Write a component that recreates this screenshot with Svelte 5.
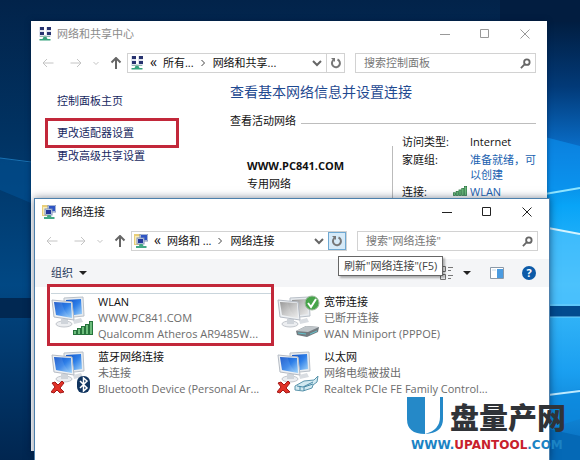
<script lang="ts">
    type Kind = "wifi" | "modem" | "bluetooth" | "ethernet";

    interface Connection {
        name: string;
        status: string;
        device: string;
        kind: Kind;
        selected?: boolean;
    }

    const connections: Connection[] = [
        { name: "WLAN", status: "WWW.PC841.COM", device: "Qualcomm Atheros AR9485W...", kind: "wifi", selected: true },
        { name: "宽带连接", status: "已断开连接", device: "WAN Miniport (PPPOE)", kind: "modem" },
        { name: "蓝牙网络连接", status: "未连接", device: "Bluetooth Device (Personal Ar...", kind: "bluetooth" },
        { name: "以太网", status: "网络电缆被拔出", device: "Realtek PCIe FE Family Control...", kind: "ethernet" },
    ];

    let centerSearch = $state("");
    let connSearch = $state("");
</script>

{#snippet centerIcon()}
    <svg class="icon" viewBox="0 0 14 14" aria-hidden="true">
        <g fill="#dfe4ee">
            <rect x="1" y="0" width="5" height="5" />
            <rect x="8" y="0" width="5" height="5" />
            <rect x="1" y="5" width="5" height="5" />
            <rect x="8" y="5" width="5" height="5" />
        </g>
        <g fill="#27336f">
            <rect x="2" y="0" width="4" height="3" />
            <rect x="9" y="0" width="4" height="3" />
            <rect x="2" y="5" width="4" height="3" />
            <rect x="9" y="5" width="4" height="3" />
        </g>
        <path d="M7 8v3M2 9.500h10" stroke="#8fb7ad" />
        <path d="M5.500 10h3l1 2h3v1.500h-11V12h3z" fill="#35a27c" />
    </svg>
{/snippet}

{#snippet connIcon()}
    <svg class="icon" viewBox="0 0 14 14" aria-hidden="true">
        <rect x="0" y="0" width="8" height="11" fill="#e9ce78" />
        <rect x="1" y="2" width="5" height="8" fill="#f8ecb8" />
        <rect x="6" y="0" width="8" height="7" fill="#cfdcf0" stroke="#7f90b8" />
        <rect x="7" y="1" width="6" height="5" fill="#2f55c4" />
        <rect x="3" y="4" width="7" height="6" fill="#dce6f5" stroke="#7f90b8" />
        <rect x="4" y="5" width="5" height="4" fill="#24379a" />
        <path d="M5.500 10h3l1 2h3v2H2v-2h3z" fill="#43a884" />
    </svg>
{/snippet}

{#snippet bars()}
    {#each [4, 6, 8, 10, 13] as h, i}
        <rect x={0.5 + i * 4} y={13.5 - h} width="3" height={h} fill="#6dbd7c" stroke="#26733c" />
    {/each}
{/snippet}

{#snippet titlebar(title: string, icon: any)}
    <header class="titlebar">
        {@render icon()}
        <h1>{title}</h1>
        <div class="controls">
            <button aria-label="最小化"><svg viewBox="0 0 10 10"><path d="M0 5.500h10" /></svg></button>
            <button aria-label="最大化"><svg viewBox="0 0 10 10"><path d="M.5.5h8v8h-8z" /></svg></button>
            <button aria-label="关闭"><svg viewBox="0 0 10 10"><path d="M.5.5l9 9M9.500.5l-9 9" /></svg></button>
        </div>
    </header>
{/snippet}

{#snippet navButtons()}
    <div class="nav">
        <button aria-label="后退" disabled><svg viewBox="0 0 12 12"><path d="M11.500 6H1M5 2L1 6l4 4" /></svg></button>
        <button aria-label="前进" disabled><svg viewBox="0 0 12 12"><path d="M.5 6H11M7 2l4 4-4 4" /></svg></button>
        <button class="recent" aria-label="最近浏览的位置" disabled><svg viewBox="0 0 12 12"><path d="M3.500 5L6 7.500 8.500 5" /></svg></button>
        <button class="up" aria-label="上移"><svg viewBox="0 0 12 12"><path d="M6 12V1M1.500 5.500L6 1l4.500 4.500" /></svg></button>
    </div>
{/snippet}

{#snippet address(first: string, second: string, icon: any, hot: boolean)}
    <div class="address">
        {@render icon()}
        <span class="chev">«</span>
        <button class="crumb first">{first}</button>
        <svg class="sep" viewBox="0 0 6 8" aria-hidden="true"><path d="M1.500 1l3 3-3 3" /></svg>
        <button class="crumb">{second}</button>
        <button class="drop" aria-label="以前的位置"><svg viewBox="0 0 10 8"><path d="M1 2l4 4 4-4" /></svg></button>
        <button class="refresh" class:hot aria-label="刷新">
            <svg viewBox="0 0 12 12"><path d="M7.500 2.500A4 4 0 1 1 3.500 3" /><path class="head" d="M1 1h4v4z" /></svg>
        </button>
    </div>
{/snippet}

{#snippet magnifier()}
    <svg viewBox="0 0 12 12" aria-hidden="true"><circle cx="7.500" cy="4.500" r="3" /><path d="M5.500 6.500L1 11" /></svg>
{/snippet}

{#snippet adapterIcon(kind: Kind)}
    <svg class="adapter" viewBox="0 0 44 48" aria-hidden="true">
        <defs>
            <linearGradient id="screen-{kind}" x1="0" y1="0" x2="1" y2="1">
                {#if kind === "modem"}
                    <stop offset="0" stop-color="#8d8d8d" />
                    <stop offset=".5" stop-color="#c4c4c4" />
                    <stop offset="1" stop-color="#ededed" />
                {:else}
                    <stop offset="0" stop-color="#0f4fc6" />
                    <stop offset=".5" stop-color="#2e7fe8" />
                    <stop offset="1" stop-color="#a5d6fa" />
                {/if}
            </linearGradient>
        </defs>
        <path d="M22 26l8-2 2 4-9 2z" fill="#d9dde2" />
        <path d="M13 4l19-1 1 19-20 2z" fill="#e7ebef" stroke="#b9c0c8" />
        <path d="M15 6l15-1 1 15-15 2z" fill="url(#screen-{kind})" />
        <ellipse cx="13" cy="30" rx="8" ry="3" fill="#eceef1" stroke="#c2c6cc" />
        <path d="M10 25h7v5h-7z" fill="#cfd4da" />
        <path d="M1 6l20 2 2 18-20-3z" fill="#edf0f3" stroke="#b5bbc4" />
        <path d="M3 8l17 1 1 15-16-3z" fill="url(#screen-{kind})" />
        <path d="M3 8l8 .5q1 8 8 15L5 21z" fill="#fff" opacity=".1" />

        {#if kind === "wifi"}
            <g transform="translate(22 27)">{@render bars()}</g>
        {:else if kind === "modem"}
            <circle cx="35" cy="9" r="7" fill="#46a449" stroke="#9fb79f" />
            <path d="M31 9l3 4 5-8" fill="none" stroke="#fff" stroke-width="2" />
            <path d="M19 37l10-5 13 1-1 5-11 5-10-2z" fill="#737b80" />
            <path d="M19 37l10-5 13 1-11 5z" fill="#c0c6ca" />
            <path d="M21 39l8 1M33 40l7-3" stroke="#62c1cb" />
        {:else}
            <path d="M1 34l3-1 3 3 4-4 2 2-4 5 4 4-4 1-3-3-3 3-3-1 4-5z" fill="#e13228" stroke="#a31818" />
            {#if kind === "bluetooth"}
                <rect x="26" y="27" width="13" height="17" rx="6" fill="#10345f" />
                <path d="M29 32l7 7-3.500 3V29l3.500 3-7 7" fill="none" stroke="#fff" stroke-width="1.500" />
            {:else}
                <path d="M18 37l9-5 10-1 4-4-1 6-4 3-1 3-9 3-8-1z" fill="#d2e9f1" stroke="#5a94ab" />
                <path d="M20 37l6 1 10-5M23 41v-4M27 42v-4M27 38l9-3" fill="none" stroke="#4989a6" />
            {/if}
        {/if}
    </svg>
{/snippet}

<div class="desktop">
    <svg class="wallpaper" viewBox="0 0 580 460" preserveAspectRatio="none" aria-hidden="true">
        <defs>
            <linearGradient id="left" x1="0" y1="0" x2="0" y2="1">
                <stop offset="0" stop-color="#02234a" />
                <stop offset=".3" stop-color="#013363" />
                <stop offset=".62" stop-color="#014884" />
                <stop offset=".7" stop-color="#013f77" />
                <stop offset="1" stop-color="#012650" />
            </linearGradient>
            <linearGradient id="right" x1="0" y1="0" x2="0" y2="1">
                <stop offset="0" stop-color="#011d40" />
                <stop offset=".15" stop-color="#023a78" />
                <stop offset=".3" stop-color="#0a72cf" />
                <stop offset=".42" stop-color="#08a4f7" />
                <stop offset=".6" stop-color="#3dbdfb" />
                <stop offset=".8" stop-color="#1a9ff0" />
                <stop offset="1" stop-color="#0568b8" />
            </linearGradient>
        </defs>
        <rect width="580" height="460" fill="url(#left)" />
        <rect x="500" y="21" width="80" height="439" fill="url(#right)" />
        <rect x="500" width="80" height="22" fill="#021d40" />
        <path d="M0 158l31 5v40L0 190z" fill="#025294" opacity=".6" />
        <path d="M0 158l31 4" stroke="#1972b4" />
        <path d="M0 308h34v20H0z" fill="#012852" transform="translate(0 -10)" />
        <path d="M545 137l35 9v44l-35 5z" fill="#0b92f0" opacity=".6" />
        <path d="M545 194l35-6" stroke="#8ee5ff" stroke-width="2" />
        <path d="M548 228l32 6v73h-32z" fill="#55c5fd" opacity=".6" />
        <path d="M548 228l32 6" stroke="#d4f4ff" stroke-width="2" />
        <path d="M548 306h32v11h-32z" fill="#024b8f" />
        <path d="M548 305h32M548 317h32" stroke="#74d1fb" />
        <path d="M548 395l32-6v30l-32 10z" fill="#0c89de" opacity=".7" />
        <path d="M548 395l32-4" stroke="#bdeaff" stroke-width="2" />
        <path d="M548 429l32 7v24h-32z" fill="#0569b6" />
    </svg>

    <section class="window center" aria-label="网络和共享中心">
        {@render titlebar("网络和共享中心", centerIcon)}
        <div class="navrow">
            {@render navButtons()}
            {@render address("所有...", "网络和共享...", centerIcon, false)}
            <label class="search">
                <input type="text" aria-label="搜索控制面板" placeholder="搜索控制面板" bind:value={centerSearch} />
                {@render magnifier()}
            </label>
        </div>
        <div class="center-body">
            <nav class="sidebar">
                <a href="#home">控制面板主页</a>
                <a class="marked" href="#adapter">更改适配器设置</a>
                <a href="#sharing">更改高级共享设置</a>
            </nav>
            <main>
                <h2>查看基本网络信息并设置连接</h2>
                <div class="legend">查看活动网络</div>
                <div class="active">
                    <div class="network">
                        <strong>WWW.PC841.COM</strong>
                        <span>专用网络</span>
                    </div>
                    <dl>
                        <dt>访问类型:</dt>
                        <dd>Internet</dd>
                        <dt>家庭组:</dt>
                        <dd><a href="#homegroup">准备就绪，可以创建</a></dd>
                        <dt>连接: <svg class="signal" viewBox="0 0 20 14" aria-hidden="true">{@render bars()}</svg></dt>
                        <dd><a href="#wlan">WLAN</a></dd>
                    </dl>
                </div>
            </main>
        </div>
    </section>

    <section class="window connections" aria-label="网络连接">
        {@render titlebar("网络连接", connIcon)}
        <div class="navrow">
            {@render navButtons()}
            {@render address("网络和 ...", "网络连接", connIcon, true)}
            <label class="search">
                <input type="text" aria-label="搜索网络连接" placeholder={'搜索"网络连接"'} bind:value={connSearch} />
                {@render magnifier()}
            </label>
            <div class="tooltip" role="tooltip">刷新"网络连接"(F5)</div>
        </div>
        <div class="toolbar">
            <button class="organize">组织 <i class="caret"></i></button>
            <button class="view" aria-label="更改视图">
                <svg viewBox="0 0 14 14"><path d="M.5.5h5v5h-5zM.5 8.500h5v5h-5zM8 1.500h5M8 4.500h3M8 9.500h5M8 12.500h3" fill="none" stroke="#777" /></svg>
                <i class="caret"></i>
            </button>
            <button class="pane" aria-label="预览窗格">
                <svg viewBox="0 0 14 12"><path d="M.5.5h13v11H.5z" fill="#fff" stroke="#8b99a8" /><path d="M7 2h6v9H7z" fill="#4b9be0" /><path d="M2 3h4" stroke="#c4d8ea" /></svg>
            </button>
            <button class="help" aria-label="帮助">?</button>
        </div>
        <ul class="items">
            {#each connections as conn}
                <li class:selected={conn.selected}>
                    {@render adapterIcon(conn.kind)}
                    <div class="lines">
                        <span class="name">{conn.name}</span>
                        <span>{conn.status}</span>
                        <span>{conn.device}</span>
                    </div>
                </li>
            {/each}
        </ul>
    </section>

    <div class="watermark">
        <div class="brand">
            <svg viewBox="0 0 38 38" aria-hidden="true">
                <path d="M1 0h18v37Q1 37 1 22z" fill="#2589c8" />
                <path d="M19 0h15v20q0 14-15 17z" fill="#fff" opacity=".85" />
                <path d="M34 0h3v22q0 14-18 15 15-4 15-17z" fill="#2589c8" />
            </svg>
            <b>盘量产网</b>
        </div>
        <div class="site">WWW.<em>UPANTOOL</em>.COM</div>
    </div>
</div>

<style>
    :global(body) {
        margin: 0;
    }

    .desktop {
        position: relative;
        min-height: 100vh;
        overflow: hidden;
        background: #01305f;
        color: #111;
        font-family: "Open Sans", "Noto Sans CJK SC", sans-serif;
        font-size: 11px;
        line-height: 16px;
    }

    .wallpaper {
        position: absolute;
        width: 100%;
        height: 100%;
    }

    button {
        display: flex;
        align-items: center;
        justify-content: center;
        padding: 0;
        border: 0;
        background: none;
        color: inherit;
        font: inherit;
        white-space: nowrap;
    }

    a {
        color: #1a62b0;
        text-decoration: none;
    }

    .window {
        position: absolute;
        box-sizing: border-box;
        background: #fff;
    }

    .center {
        top: 21px;
        right: 33px;
        bottom: 9px;
        left: 31px;
        box-shadow: 0 0 5px rgba(0, 20, 50, 0.5);
    }

    .connections {
        top: 198px;
        right: 30px;
        bottom: -2px;
        left: 34px;
        border: 1px solid #4d80ac;
        box-shadow: 0 0 8px rgba(0, 20, 50, 0.5);
    }

    .titlebar {
        display: flex;
        align-items: center;
        gap: 5px;
        height: 26px;
        padding-left: 7px;
    }

    .titlebar h1 {
        flex: 1;
        margin: 0;
        font-size: 11px;
        font-weight: 400;
    }

    .center h1 {
        color: #8b8b8b;
    }

    .icon {
        width: 14px;
        height: 14px;
        flex: none;
    }

    .controls {
        display: flex;
        gap: 20px;
        padding-right: 12px;
    }

    .controls button {
        width: 20px;
        height: 20px;
    }

    .controls svg {
        width: 10px;
        height: 10px;
        fill: none;
        stroke: #222;
    }

    .center .controls svg {
        stroke: #999;
    }

    .navrow {
        position: relative;
        display: flex;
        gap: 10px;
        align-items: center;
        height: 32px;
        padding: 0 11px;
    }

    .nav {
        display: flex;
        flex: none;
        align-items: center;
        gap: 16px;
        margin-right: -5px;
    }

    .nav button {
        width: 12px;
        height: 16px;
    }

    .nav svg {
        width: 12px;
        height: 12px;
        flex: none;
        fill: none;
        stroke: #c4c4c4;
    }

    .nav .recent,
    .nav .up {
        margin-left: -8px;
    }

    .nav .up svg {
        stroke: #666;
        stroke-width: 2;
    }

    .address,
    .search {
        display: flex;
        align-items: center;
        box-sizing: border-box;
        height: 20px;
        border: 1px solid #d2d2d2;
        background: #fff;
    }

    .address {
        flex: 1;
        padding-left: 2px;
    }

    .chev {
        margin: -2px 6px 0 6px;
        font-size: 14px;
    }

    .first {
        margin-right: 6px;
    }

    .sep {
        width: 6px;
        height: 8px;
        margin-right: 7px;
        fill: none;
        stroke: #444;
    }

    .drop {
        margin-left: auto;
        width: 18px;
    }

    .drop svg {
        width: 10px;
        height: 8px;
        fill: none;
        stroke: #666;
        stroke-width: 2;
    }

    .refresh {
        align-self: stretch;
        width: 18px;
        border-left: 1px solid #d2d2d2;
    }

    .refresh svg {
        width: 12px;
        height: 12px;
        fill: none;
        stroke: #777;
        stroke-width: 2;
    }

    .refresh .head {
        fill: #777;
        stroke: none;
    }

    .refresh.hot {
        border: 1px solid #6ea8d2;
        background: #d6eaf8;
    }

    .search {
        flex: 0 1 181px;
        min-width: 0;
        padding: 0 4px 0 8px;
    }

    .search input {
        flex: 1;
        min-width: 0;
        padding: 0;
        border: 0;
        outline: 0;
        background: none;
        font: inherit;
    }

    .search input::placeholder {
        color: #777;
        opacity: 1;
    }

    .search svg {
        width: 11px;
        height: 11px;
        fill: none;
        stroke: #666;
        stroke-width: 2;
    }

    .center-body {
        display: flex;
    }

    .sidebar {
        display: flex;
        flex-direction: column;
        width: 199px;
        padding-top: 14px;
    }

    .sidebar a {
        margin-left: 26px;
        color: #17285f;
    }

    .sidebar .marked {
        margin: 9px 51px 0 14px;
        padding: 4px 0 4px 9px;
        border: 3px solid #c2283a;
    }

    main {
        flex: 1;
        min-width: 0;
        padding-right: 11px;
    }

    h2 {
        margin: 3px 0 11px;
        color: #1f4a91;
        font-size: 14px;
        font-weight: 400;
        line-height: 20px;
    }

    .legend {
        display: flex;
        align-items: center;
        gap: 5px;
    }

    .legend::after {
        content: "";
        flex: 1;
        height: 1px;
        margin-top: 4px;
        background: #bdbdbd;
    }

    .active {
        display: flex;
        padding-top: 5px;
    }

    .network {
        display: flex;
        flex: 1;
        flex-direction: column;
        gap: 2px;
        padding: 24px 0 0 17px;
    }

    dl {
        display: grid;
        grid-template-columns: 68px 66px;
        row-gap: 2px;
        height: 300px;
        align-content: start;
        margin: 12px 0 0;
        padding-left: 9px;
        border-left: 1px solid #bbb;
    }

    /* First row starts above the divider line */
    dl > :nth-child(-n + 2) {
        margin-top: -12px;
    }

    dd {
        margin: 0;
        line-height: 15px;
    }

    dt {
        display: flex;
        justify-content: space-between;
    }

    .signal {
        width: 14px;
        height: 14px;
        margin-right: 3px;
    }

    .tooltip {
        position: absolute;
        z-index: 2;
        top: 31px;
        left: 303px;
        padding: 1px 5px;
        border: 1px solid #666;
        background: #fff;
        box-shadow: 2px 2px 2px rgba(0, 0, 0, 0.3);
        color: #444;
        white-space: nowrap;
    }

    .toolbar {
        display: flex;
        align-items: center;
        height: 28px;
        margin-top: 2px;
        padding: 0 13px 0 16px;
        background: #f4f5f7;
        color: #26395c;
    }

    .caret {
        margin-left: 6px;
        border: 4px solid transparent;
        border-top: 4px solid #222;
        border-bottom: 0;
    }

    .view {
        margin-left: auto;
    }

    .view svg {
        width: 14px;
        height: 14px;
        margin-right: 3px;
    }

    .pane {
        margin: 0 18px 0 19px;
    }

    .pane svg {
        width: 14px;
        height: 12px;
    }

    .help {
        width: 14px;
        height: 14px;
        border-radius: 50%;
        background: #0e5ba8;
        color: #fff;
        font-weight: 700;
    }

    .items {
        display: grid;
        grid-template-columns: 226px 1fr;
        row-gap: 7px;
        margin: 0;
        padding: 7px 0 0 16px;
        list-style: none;
    }

    .items li {
        position: relative;
        display: flex;
        gap: 3px;
    }

    /* Red frame hangs outside the item so the grid keeps its rhythm */
    .selected::before {
        content: "";
        position: absolute;
        inset: -10px 3px -4px -4px;
        border: 3px solid #c2283a;
    }

    .selected::after {
        content: "";
        position: absolute;
        inset: -1px 6px auto 0;
        border-top: 1px solid #c9d5dc;
    }

    .adapter {
        flex: none;
        width: 44px;
        height: 48px;
    }

    .lines {
        display: flex;
        flex-direction: column;
        color: #6c6c6c;
        white-space: nowrap;
    }

    .lines .name {
        color: #111;
    }

    .watermark {
        position: absolute;
        right: 14px;
        bottom: 8px;
        z-index: 3;
        white-space: nowrap;
    }

    .brand {
        display: flex;
        align-items: center;
        gap: 6px;
        color: #303338;
        font-size: 29px;
        line-height: 38px;
    }

    .brand svg {
        width: 38px;
        height: 38px;
    }

    .brand b {
        font-family: "Noto Sans CJK SC", sans-serif;
        font-weight: 900;
    }

    .site {
        margin-top: 3px;
        padding-left: 5px;
        color: #1b83c4;
        font-family: "DejaVu Sans", sans-serif;
        font-size: 12px;
        font-weight: 700;
        line-height: 14px;
    }

    .site em {
        color: #c8202c;
        font-style: normal;
    }
</style>
